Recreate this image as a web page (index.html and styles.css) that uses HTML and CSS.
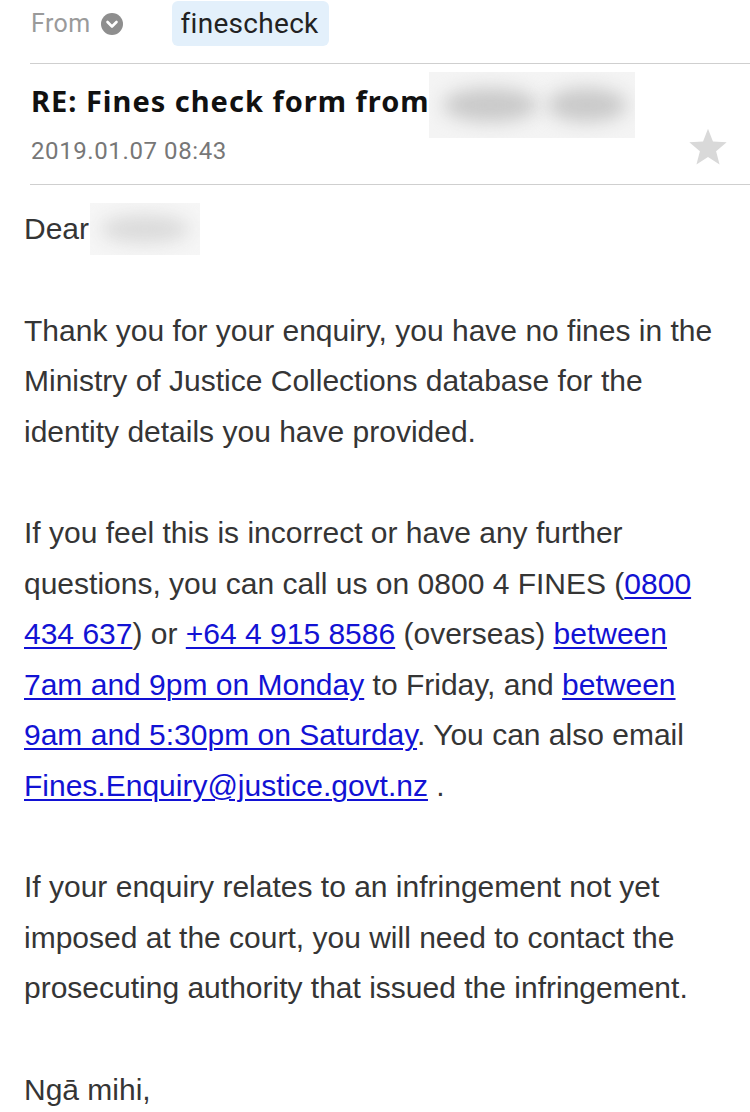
FILE: index.html
```html
<!DOCTYPE html>
<html>
<head>
<meta charset="utf-8">
<link rel="stylesheet" href="styles.css">
</head>
<body>
<div class="mail">
  <div class="from-row">
    <span class="from-label">From</span>
    <svg class="chev" width="22" height="22" viewBox="0 0 22 22"><circle cx="11" cy="11" r="11" fill="#8e8e8e"/><path d="M6.5 9 L11 13.5 L15.5 9" fill="none" stroke="#fff" stroke-width="2.6" stroke-linecap="round" stroke-linejoin="round"/></svg>
    <span class="pill">finescheck</span>
  </div>
  <div class="subject">
    <div class="title-row">
      <span class="title">RE: Fines check form from</span>
      <span class="blur blur-title"><span class="blob b1"></span><span class="blob b2"></span></span>
    </div>
    <div class="date-row">
      <span class="date">2019.01.07 08:43</span>
      <svg class="star" width="40" height="38" viewBox="0 0 24 23"><path d="M12 0.5 L15 8.2 L23.3 8.7 L16.9 14 L19 22.1 L12 17.6 L5 22.1 L7.1 14 L0.7 8.7 L9 8.2 Z" fill="#d9d9d9"/></svg>
    </div>
  </div>
  <div class="body">
    <p class="dear">Dear <span class="blur blur-name"><span class="blob b3"></span></span></p>
    <p>Thank you for your enquiry, you have no fines in the<br>Ministry of Justice Collections database for the<br>identity details you have provided.</p>
    <p>If you feel this is incorrect or have any further<br>questions, you can call us on 0800 4 FINES (<a href="#">0800<br>434 637</a>) or <a href="#">+64 4 915 8586</a> (overseas) <a href="#">between<br>7am and 9pm on Monday</a> to Friday, and <a href="#">between<br>9am and 5:30pm on Saturday</a>. You can also email<br><a href="#">Fines.Enquiry@justice.govt.nz</a> .</p>
    <p>If your enquiry relates to an infringement not yet<br>imposed at the court, you will need to contact the<br>prosecuting authority that issued the infringement.</p>
    <p>Ngā mihi,</p>
  </div>
</div>
</body>
</html>
```
FILE: styles.css
```css
html, body { margin: 0; padding: 0; background: #fff; }
body { width: 750px; height: 1112px; overflow: hidden; }
.mail { font-family: Roboto, "Liberation Sans", sans-serif; }
.from-row {
  display: flex; align-items: center;
  height: 63px; padding-left: 31px; box-sizing: border-box;
  padding-bottom: 16px;
}
.from-label { color: #9a9a9a; font-size: 25px; letter-spacing: 0.4px; }
.chev { margin-left: 10px; }
.pill {
  margin-left: 49px;
  background: #e3f0fb; color: #222;
  font-size: 28px; border-radius: 6px;
  padding: 5px 10px 5px 9px; height: 35px; line-height: 35px;
  letter-spacing: 0.3px;
}
.subject {
  margin-left: 30px;
  border-top: 1px solid #cfcfcf;
  border-bottom: 1px solid #cfcfcf;
  height: 120px;
}
.title-row { display: flex; align-items: flex-start; height: 72px; }
.title {
  font-family: "Noto Sans", "Open Sans", sans-serif;
  font-weight: 700; font-size: 29px; color: #111;
  padding-top: 18px; line-height: 38px; margin-left: 1px;
  letter-spacing: 1px;
}
.blur { display: inline-block; position: relative; background: #f4f4f4; overflow: hidden; }
.blur-title { width: 206px; height: 66px; margin-top: 8px; margin-left: -1px; }
.blob { position: absolute; border-radius: 50%; background: #c9c9c9; filter: blur(9px); }
.b1 { left: 14px; top: 16px; width: 95px; height: 34px; }
.b2 { left: 118px; top: 16px; width: 80px; height: 34px; }
.date-row { display: flex; justify-content: space-between; align-items: flex-start; padding-right: 22px; }
.date { color: #777; font-size: 24px; margin-left: 1px; margin-top: 1px; letter-spacing: 0.6px; }
.star { margin-top: -8px; }
.body {
  font-family: "Liberation Sans", Arial, sans-serif;
  color: #353535; font-size: 30px; line-height: 50.6px;
  padding: 0 24px; margin-top: 18px;
  white-space: nowrap;
}
.body p { margin: 0 0 50.6px 0; }
.dear { display: flex; align-items: center; }
.blur-name { width: 110px; height: 52px; margin-left: 1px; background: #f6f6f6; }
.b3 { left: 10px; top: 12px; width: 90px; height: 28px; background: #dadada; }
a { color: #1212d4; text-decoration: underline; text-underline-offset: 3px; text-decoration-thickness: 1.5px; }
```
